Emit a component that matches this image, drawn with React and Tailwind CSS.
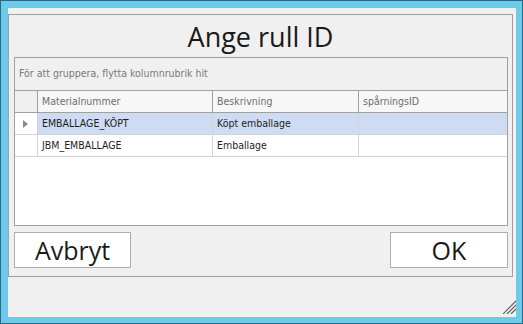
import React from 'react';

const rows = [
  { id: 'EMBALLAGE_KÖPT', desc: 'Köpt emballage', track: '', selected: true },
  { id: 'JBM_EMBALLAGE', desc: 'Emballage', track: '', selected: false },
];

const Grip = () => (
  <svg width="13" height="14" viewBox="0 0 13 14" className="absolute right-0 bottom-[3px]">
    <line x1="0" y1="14" x2="13" y2="1" stroke="#5a5a5a" strokeWidth="1.2" />
    <line x1="4" y1="14" x2="13" y2="5" stroke="#5a5a5a" strokeWidth="1.2" />
    <line x1="8" y1="14" x2="13" y2="9" stroke="#5a5a5a" strokeWidth="1.2" />
  </svg>
);

const App = () => {
  const small = { fontFamily: '"DejaVu Sans Condensed", "DejaVu Sans", sans-serif' };
  const big = { fontFamily: '"Open Sans", "Noto Sans", sans-serif' };

  return (
    <div className="w-[523px] h-[324px] border border-[#2b6a86] bg-[#6ccbe8] pt-[7px] pl-[7px] pr-[6px] pb-[6px]">
      <div className="relative w-full h-full bg-[#f0f0f0] pt-[6px]">
        <div className="w-[505px] h-[263px] border border-[#a0a0a0] flex flex-col">
          {/* Title */}
          <div className="h-[42px] flex items-center justify-center">
            <h1 style={big} className="text-[27px] leading-none text-[#1a1a1a]">Ange rull ID</h1>
          </div>

          {/* Grid */}
          <div className="ml-[5px] mr-[4px] h-[169px] border border-[#a0a0a0] bg-white flex flex-col">
            <div style={small} className="h-[33px] bg-[#f0f0f0] border-b border-[#a0a0a0] flex items-center pl-[4px] text-[10.5px] text-[#7a7a7a]">
              För att gruppera, flytta kolumnrubrik hit
            </div>
            <div style={small} className="grid grid-cols-[23px_175px_146px_1fr] h-[22px] bg-[#f7f7f7] border-b border-[#a0a0a0] text-[10.5px] text-[#6e6e6e]">
              <div className="border-r border-[#a0a0a0] bg-[#f0f0f0]" />
              <div className="border-r border-[#a0a0a0] flex items-center pl-[4px]">Materialnummer</div>
              <div className="border-r border-[#a0a0a0] flex items-center pl-[4px]">Beskrivning</div>
              <div className="flex items-center pl-[4px]">spårningsID</div>
            </div>
            {rows.map(r => (
              <div key={r.id} style={small}
                className={`grid grid-cols-[23px_175px_146px_1fr] h-[22px] border-b border-[#d4d4d4] text-[10.5px] text-[#1e1e1e] ${r.selected ? 'bg-[#cddcf2]' : 'bg-white'}`}>
                <div className="border-r border-[#d4d4d4] bg-white flex items-center pl-[8px]">
                  {r.selected && (
                    <svg width="5" height="8" viewBox="0 0 5 8"><polygon points="0,0 5,4 0,8" fill="#8a8a8a" /></svg>
                  )}
                </div>
                <div className="border-r border-[#d4d4d4] flex items-center pl-[4px]">{r.id}</div>
                <div className="border-r border-[#d4d4d4] flex items-center pl-[4px]">{r.desc}</div>
                <div className="flex items-center pl-[4px]">{r.track}</div>
              </div>
            ))}
          </div>

          {/* Buttons */}
          <div className="mt-[6px] ml-[5px] mr-[4px] flex justify-between">
            <button style={big} className="w-[117px] h-[36px] bg-white border border-[#adadad] text-[25px] leading-none text-[#1a1a1a] flex items-center justify-center">
              Avbryt
            </button>
            <button style={big} className="w-[118px] h-[36px] bg-white border border-[#adadad] text-[25px] leading-none text-[#1a1a1a] flex items-center justify-center">
              OK
            </button>
          </div>
        </div>
        <Grip />
      </div>
    </div>
  );
};

export default App;
